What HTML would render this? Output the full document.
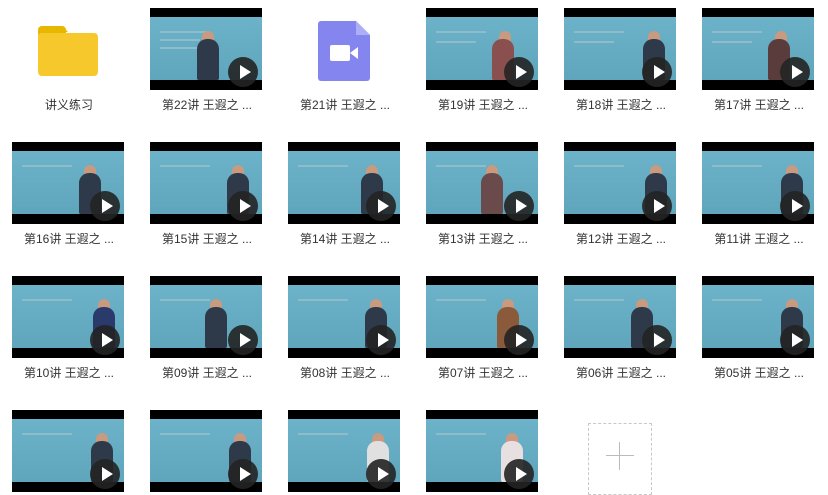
<!DOCTYPE html><html><head><meta charset="utf-8"><style>
body{margin:0;width:828px;height:486px;background:#fff;overflow:hidden;position:relative;font-family:"Liberation Sans","Noto Sans CJK SC",sans-serif}
.t{position:absolute;width:112px;height:82px;background:#000;overflow:hidden}
.i{position:absolute;left:0;top:9px;width:112px;height:63px;background:linear-gradient(180deg,#6cb2c8,#5fa6bd)}
.ln{position:absolute;left:10px;height:2px;background:#8fbccb}
.p{position:absolute;top:22px;width:22px;height:41px;background:#2e3a4a;border-radius:10px 10px 2px 2px}
.h{position:absolute;top:14px;width:12px;height:14px;background:#c89a80;border-radius:6px}
.pl{position:absolute;left:78px;top:49px;width:30px;height:30px;border-radius:50%;background:rgba(35,35,35,.9)}
.pl:after{content:"";position:absolute;left:12px;top:8px;border-left:11px solid #fff;border-top:7px solid transparent;border-bottom:7px solid transparent}
.l{position:absolute;width:138px;text-align:center;font-size:12px;color:#333;line-height:16px}
</style></head><body>
<svg style="position:absolute;left:38px;top:26px" width="60" height="50"><path d="M4 0h20l6 6H4z" fill="#e8b800"/><rect x="0" y="0" width="28" height="12" rx="4" fill="#e8b800"/><rect x="0" y="7" width="60" height="43" rx="4" fill="#f7c82c"/></svg>
<div class="l" style="left:0;top:97px">讲义练习</div>
<svg style="position:absolute;left:318px;top:21px" width="52" height="60"><path d="M3 0h35l14 14v43a3 3 0 0 1-3 3H3a3 3 0 0 1-3-3V3a3 3 0 0 1 3-3z" fill="#8585ef"/><path d="M38 0l14 14H38z" fill="#aeaef6"/><rect x="12" y="24" width="20" height="16" rx="2" fill="#fff"/><path d="M32 32l8-6v12z" fill="#fff"/></svg>
<div class="l" style="left:276px;top:97px">第21讲 王遐之 ...</div>

<div class="t" style="left:150px;top:8px"><div class="i"><div class="ln" style="top:14px;width:50px"></div><div class="ln" style="top:22px;width:40px"></div><div class="ln" style="top:30px;width:45px"></div><div class="h" style="left:52px"></div><div class="p" style="left:47px"></div></div><div class="pl"></div></div><div class="l" style="left:138px;top:97px">第22讲 王遐之 ...</div>
<div class="t" style="left:426px;top:8px"><div class="i"><div class="ln" style="top:14px;width:50px"></div><div class="ln" style="top:24px;width:40px"></div><div class="h" style="left:73px"></div><div class="p" style="left:66px;background:#8a5050"></div></div><div class="pl"></div></div><div class="l" style="left:414px;top:97px">第19讲 王遐之 ...</div>
<div class="t" style="left:564px;top:8px"><div class="i"><div class="ln" style="top:14px;width:50px"></div><div class="ln" style="top:24px;width:40px"></div><div class="h" style="left:84px"></div><div class="p" style="left:79px"></div></div><div class="pl"></div></div><div class="l" style="left:552px;top:97px">第18讲 王遐之 ...</div>
<div class="t" style="left:702px;top:8px"><div class="i"><div class="ln" style="top:14px;width:50px"></div><div class="ln" style="top:24px;width:40px"></div><div class="h" style="left:73px"></div><div class="p" style="left:66px;background:#5a3c3c"></div></div><div class="pl"></div></div><div class="l" style="left:690px;top:97px">第17讲 王遐之 ...</div>

<div class="t" style="left:12px;top:142px"><div class="i"><div class="ln" style="top:14px;width:50px"></div><div class="h" style="left:72px"></div><div class="p" style="left:67px"></div></div><div class="pl"></div></div><div class="l" style="left:0;top:231px">第16讲 王遐之 ...</div>
<div class="t" style="left:150px;top:142px"><div class="i"><div class="ln" style="top:14px;width:50px"></div><div class="h" style="left:82px"></div><div class="p" style="left:77px"></div></div><div class="pl"></div></div><div class="l" style="left:138px;top:231px">第15讲 王遐之 ...</div>
<div class="t" style="left:288px;top:142px"><div class="i"><div class="ln" style="top:14px;width:50px"></div><div class="h" style="left:78px"></div><div class="p" style="left:73px"></div></div><div class="pl"></div></div><div class="l" style="left:276px;top:231px">第14讲 王遐之 ...</div>
<div class="t" style="left:426px;top:142px"><div class="i"><div class="ln" style="top:14px;width:50px"></div><div class="h" style="left:60px"></div><div class="p" style="left:55px;background:#6a4a4a"></div></div><div class="pl"></div></div><div class="l" style="left:414px;top:231px">第13讲 王遐之 ...</div>
<div class="t" style="left:564px;top:142px"><div class="i"><div class="ln" style="top:14px;width:50px"></div><div class="h" style="left:86px"></div><div class="p" style="left:81px"></div></div><div class="pl"></div></div><div class="l" style="left:552px;top:231px">第12讲 王遐之 ...</div>
<div class="t" style="left:702px;top:142px"><div class="i"><div class="ln" style="top:14px;width:50px"></div><div class="h" style="left:84px"></div><div class="p" style="left:79px"></div></div><div class="pl"></div></div><div class="l" style="left:690px;top:231px">第11讲 王遐之 ...</div>

<div class="t" style="left:12px;top:276px"><div class="i"><div class="ln" style="top:14px;width:50px"></div><div class="h" style="left:86px"></div><div class="p" style="left:81px;background:#2a3a6a"></div></div><div class="pl"></div></div><div class="l" style="left:0;top:365px">第10讲 王遐之 ...</div>
<div class="t" style="left:150px;top:276px"><div class="i"><div class="ln" style="top:14px;width:50px"></div><div class="h" style="left:60px"></div><div class="p" style="left:55px"></div></div><div class="pl"></div></div><div class="l" style="left:138px;top:365px">第09讲 王遐之 ...</div>
<div class="t" style="left:288px;top:276px"><div class="i"><div class="ln" style="top:14px;width:50px"></div><div class="h" style="left:82px"></div><div class="p" style="left:77px"></div></div><div class="pl"></div></div><div class="l" style="left:276px;top:365px">第08讲 王遐之 ...</div>
<div class="t" style="left:426px;top:276px"><div class="i"><div class="ln" style="top:14px;width:50px"></div><div class="h" style="left:76px"></div><div class="p" style="left:71px;background:#8a5a3a"></div></div><div class="pl"></div></div><div class="l" style="left:414px;top:365px">第07讲 王遐之 ...</div>
<div class="t" style="left:564px;top:276px"><div class="i"><div class="ln" style="top:14px;width:50px"></div><div class="h" style="left:72px"></div><div class="p" style="left:67px"></div></div><div class="pl"></div></div><div class="l" style="left:552px;top:365px">第06讲 王遐之 ...</div>
<div class="t" style="left:702px;top:276px"><div class="i"><div class="ln" style="top:14px;width:50px"></div><div class="h" style="left:84px"></div><div class="p" style="left:79px"></div></div><div class="pl"></div></div><div class="l" style="left:690px;top:365px">第05讲 王遐之 ...</div>

<div class="t" style="left:12px;top:410px"><div class="i"><div class="ln" style="top:14px;width:50px"></div><div class="h" style="left:84px"></div><div class="p" style="left:79px"></div></div><div class="pl"></div></div>
<div class="t" style="left:150px;top:410px"><div class="i"><div class="ln" style="top:14px;width:50px"></div><div class="h" style="left:84px"></div><div class="p" style="left:79px"></div></div><div class="pl"></div></div>
<div class="t" style="left:288px;top:410px"><div class="i"><div class="ln" style="top:14px;width:50px"></div><div class="h" style="left:84px"></div><div class="p" style="left:79px;background:#e0e0e0"></div></div><div class="pl"></div></div>
<div class="t" style="left:426px;top:410px"><div class="i"><div class="ln" style="top:14px;width:50px"></div><div class="h" style="left:80px"></div><div class="p" style="left:75px;background:#e8e0e0"></div></div><div class="pl"></div></div>
<div style="position:absolute;left:588px;top:423px;width:62px;height:70px;border:1px dashed #c8c8c8"></div>
<div style="position:absolute;left:606px;top:455px;width:28px;height:1px;background:#bbb"></div>
<div style="position:absolute;left:619px;top:442px;width:1px;height:28px;background:#bbb"></div>
</body></html>
